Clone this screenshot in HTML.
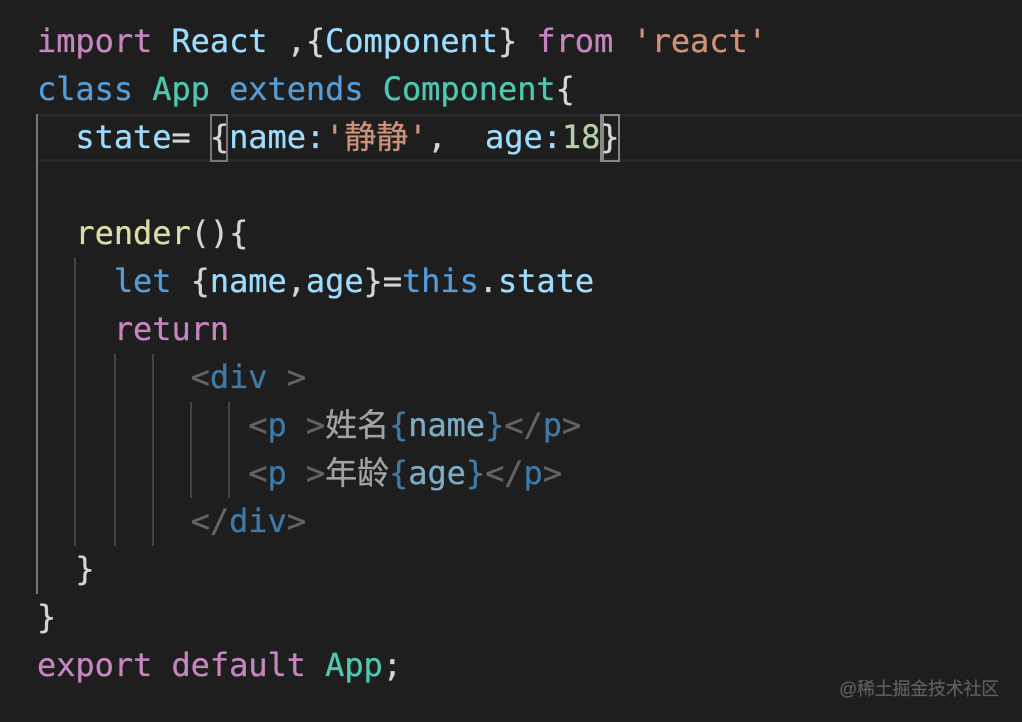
<!DOCTYPE html>
<html><head><meta charset="utf-8">
<style>
html,body{margin:0;padding:0;background:#1e1e1e}
#w{position:relative;width:1022px;height:722px;overflow:hidden;background:#1e1e1e}
.l{position:absolute;left:37px;white-space:pre;font:32px/48px "DejaVu Sans Mono","Noto Sans CJK SC",monospace;letter-spacing:-.06px;color:#d4d4d4;-webkit-text-stroke:.3px currentColor;filter:blur(.35px)}
.b{position:absolute}
.k{color:#c586c0}.v{color:#9cdcfe}.s{color:#ce9178}.c{color:#569cd6}.t{color:#4ec9b0}.f{color:#dcdcaa}.n{color:#b5cea8}
.g{color:#636363}.d{color:#3f7aa6}.x{color:#a3a3a3}.m{color:#7dacc4}.e{color:#3f7aa6}
.i{position:absolute;width:2px;background:#444}
#wm{position:absolute;left:839px;top:679px;font:18px/20px "Liberation Sans","Noto Sans CJK SC",sans-serif;letter-spacing:-.25px;color:#5f5f5f;white-space:pre;-webkit-text-stroke:.2px currentColor;filter:blur(.3px)}
</style></head><body><div id="w">
<div class="b" style="left:38px;top:114px;width:984px;height:48px;box-sizing:border-box;border-top:3px solid #282828;border-bottom:3px solid #282828"></div>
<div class="b" style="left:210px;top:114px;width:18px;height:48px;box-sizing:border-box;border:2px solid #777"></div>
<div class="b" style="left:600px;top:114px;width:20px;height:48px;box-sizing:border-box;border:2px solid #888;border-left-width:4px"></div>
<div class="i" style="left:36px;top:114px;height:480px;background:#777"></div>
<div class="i" style="left:74px;top:258px;height:288px"></div>
<div class="i" style="left:114px;top:354px;height:192px"></div>
<div class="i" style="left:152px;top:354px;height:192px"></div>
<div class="i" style="left:190px;top:402px;height:96px"></div>
<div class="i" style="left:228px;top:402px;height:96px"></div>
<div class="l" style="top:17px"><span class="k">import</span> <span class="v">React</span> ,{<span class="v">Component</span>} <span class="k">from</span> <span class="s">'react'</span></div>
<div class="l" style="top:65px"><span class="c">class</span> <span class="t">App</span> <span class="c">extends</span> <span class="t">Component</span>{</div>
<div class="l" style="top:113px">  <span class="v">state</span>= {<span class="v">name</span><span class="v">:</span><span class="s">'静静'</span>,  <span class="v">age:</span><span class="n">18</span>}</div>
<div class="l" style="top:209px">  <span class="f">render</span>(){</div>
<div class="l" style="top:257px">    <span class="c">let</span> {<span class="v">name</span>,<span class="v">age</span>}=<span class="c">this</span>.<span class="v">state</span></div>
<div class="l" style="top:305px">    <span class="k">return</span></div>
<div class="l" style="top:353px">        <span class="g">&lt;</span><span class="d">div</span> <span class="g">&gt;</span></div>
<div class="l" style="top:401px">           <span class="g">&lt;</span><span class="d">p</span> <span class="g">&gt;</span><span class="x">姓名</span><span class="e">{</span><span class="m">name</span><span class="e">}</span><span class="g">&lt;/</span><span class="d">p</span><span class="g">&gt;</span></div>
<div class="l" style="top:449px">           <span class="g">&lt;</span><span class="d">p</span> <span class="g">&gt;</span><span class="x">年龄</span><span class="e">{</span><span class="m">age</span><span class="e">}</span><span class="g">&lt;/</span><span class="d">p</span><span class="g">&gt;</span></div>
<div class="l" style="top:497px">        <span class="g">&lt;/</span><span class="d">div</span><span class="g">&gt;</span></div>
<div class="l" style="top:545px">  }</div>
<div class="l" style="top:593px">}</div>
<div class="l" style="top:641px"><span class="k">export</span> <span class="k">default</span> <span class="t">App</span>;</div>
<div id="wm">@稀土掘金技术社区</div>
</div></body></html>
